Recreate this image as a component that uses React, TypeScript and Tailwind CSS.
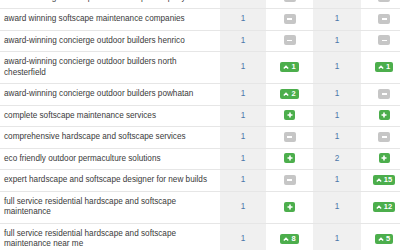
import React from 'react';

type Mark = 'same' | 'new' | number;

interface Row {
  keyword: string;
  a: number;
  aMove: Mark;
  b: number;
  bMove: Mark;
}

const rows: Row[] = [
  { keyword: 'award winning hardscape and softscape company', a: 1, aMove: 'same', b: 1, bMove: 'same' },
  { keyword: 'award winning softscape maintenance companies', a: 1, aMove: 'same', b: 1, bMove: 'same' },
  { keyword: 'award-winning concierge outdoor builders henrico', a: 1, aMove: 'same', b: 1, bMove: 'same' },
  { keyword: 'award-winning concierge outdoor builders north chesterfield', a: 1, aMove: 1, b: 1, bMove: 1 },
  { keyword: 'award-winning concierge outdoor builders powhatan', a: 1, aMove: 2, b: 1, bMove: 'same' },
  { keyword: 'complete softscape maintenance services', a: 1, aMove: 'new', b: 1, bMove: 'new' },
  { keyword: 'comprehensive hardscape and softscape services', a: 1, aMove: 'same', b: 1, bMove: 'same' },
  { keyword: 'eco friendly outdoor permaculture solutions', a: 1, aMove: 'new', b: 2, bMove: 'new' },
  { keyword: 'expert hardscape and softscape designer for new builds', a: 1, aMove: 'same', b: 1, bMove: 15 },
  { keyword: 'full service residential hardscape and softscape maintenance', a: 1, aMove: 'new', b: 1, bMove: 12 },
  { keyword: 'full service residential hardscape and softscape maintenance near me', a: 1, aMove: 8, b: 1, bMove: 5 },
];

function Badge({ mark }: { mark: Mark }) {
  if (mark === 'same') {
    return (
      <span className="inline-flex items-center justify-center w-[12px] h-[10px] rounded-[2px] bg-[#c6c6c6] align-middle">
        <span className="block w-[5px] h-[1.5px] bg-white" />
      </span>
    );
  }
  if (mark === 'new') {
    return (
      <span className="inline-flex items-center justify-center w-[11px] h-[10px] rounded-[2px] bg-[#4cae4c] align-middle">
        <svg width="6" height="6" viewBox="0 0 6 6">
          <path d="M3 0.5V5.5M0.5 3H5.5" stroke="white" strokeWidth="1.6" />
        </svg>
      </span>
    );
  }
  return (
    <span className="inline-flex items-center justify-center gap-[2px] px-[3px] h-[10px] rounded-[2px] bg-[#4cae4c] text-white text-[7.5px] font-bold leading-none align-middle">
      <svg width="6" height="4" viewBox="0 0 6 4">
        <path d="M0.8 3.4L3 1.2L5.2 3.4" stroke="white" strokeWidth="1.4" fill="none" />
      </svg>
      {mark}
    </span>
  );
}

export default function App() {
  return (
    <div className="w-[400px] h-[250px] overflow-hidden bg-white" style={{ fontFamily: '"Liberation Sans", Arial, sans-serif' }}>
      <table className="table-fixed border-collapse w-[407px] mt-[-12.5px] text-[8.2px] leading-[10.5px] text-[#3a3a3a]">
        <colgroup>
          <col className="w-[220px]" />
          <col className="w-[46px]" />
          <col className="w-[47px]" />
          <col className="w-[48px]" />
          <col className="w-[46px]" />
        </colgroup>
        <tbody>
          {rows.map((r, i) => (
            <tr key={i} className="border-b border-[#e6e6e6]">
              <td className="pl-[4px] pr-[6px] py-[5px] align-middle">{r.keyword}</td>
              <td className="bg-[#f0f0f0] text-center align-middle text-[#4a76a8]">{r.a}</td>
              <td className="text-center align-middle">
                <Badge mark={r.aMove} />
              </td>
              <td className="bg-[#f0f0f0] text-center align-middle text-[#4a76a8]">{r.b}</td>
              <td className="text-center align-middle">
                <Badge mark={r.bMove} />
              </td>
            </tr>
          ))}
        </tbody>
      </table>
    </div>
  );
}
